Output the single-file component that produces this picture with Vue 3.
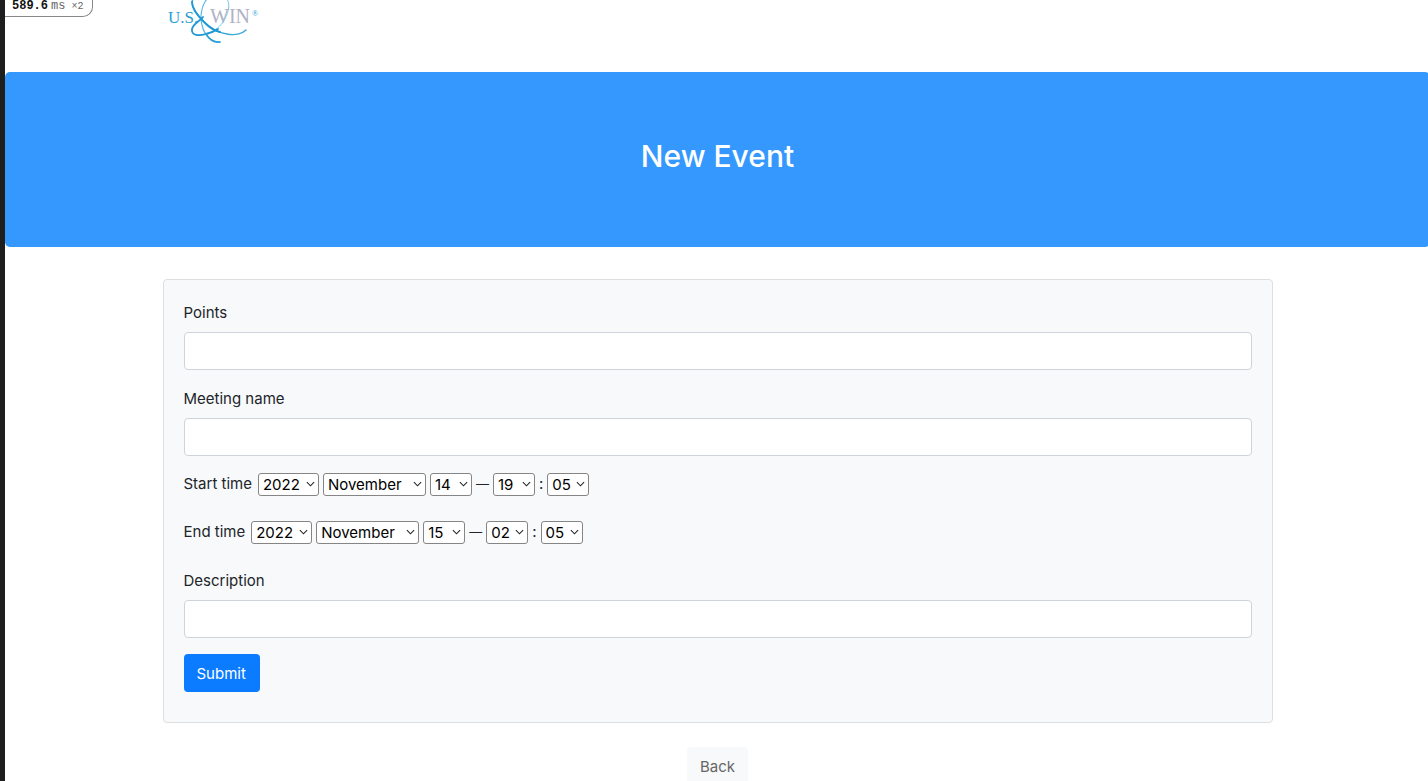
<script setup>
import { reactive } from 'vue'

const months = ['January', 'February', 'March', 'April', 'May', 'June', 'July', 'August', 'September', 'October', 'November', 'December']
const years = ['2017', '2018', '2019', '2020', '2021', '2022', '2023', '2024', '2025', '2026', '2027']
const range = (from, to) => Array.from({ length: to - from + 1 }, (_, i) => String(i + from))
const pad = (list) => list.map((n) => n.padStart(2, '0'))
const days = range(1, 31)
const hours = pad(range(0, 23))
const minutes = pad(range(0, 59))

const form = reactive({ points: '', name: '', description: '' })
const times = reactive([
  { id: 'start', label: 'Start time', year: '2022', month: 'November', day: '14', hour: '19', minute: '05' },
  { id: 'end', label: 'End time', year: '2022', month: 'November', day: '15', hour: '02', minute: '05' },
])
const parts = [
  { key: 'year', options: years, before: '' },
  { key: 'month', options: months, before: '' },
  { key: 'day', options: days, before: '' },
  { key: 'hour', options: hours, before: '—' },
  { key: 'minute', options: minutes, before: ':' },
]
</script>

<template>
  <div class="page">
    <div class="profiler"><b>589.6</b> <span>ms</span> <small>×2</small></div>
    <header class="container header">
      <a href="#" aria-label="U.S. WIN home">
        <svg class="logo" viewBox="0 0 110 50" aria-hidden="true">
          <text x="8" y="23" class="us">U.S.</text>
          <text x="50" y="23" class="win">WIN</text>
          <text x="92" y="16" class="reg">®</text>
          <g fill="none" stroke-linecap="round">
            <path d="M47 -1C41 6 40 17 42 25C44 34 50 42 60 42" stroke="#5bb8e2" stroke-width="1.2" />
            <path d="M67 -1C71 5 68 14 63 22C59 28 53 32 45 34" stroke="#7cc6e8" stroke-width="1" />
            <path d="M33 -1C30 5 34 12 42 20C50 28 58 33 67 34C76 36 83 33 86 30" stroke="#3aa8da" stroke-width="1.4" />
            <path d="M32 2C32 9 38 16 45 23C50 28 55 31 60 32" stroke="#1e98d3" stroke-width="1.8" />
            <path d="M43 17C40 21 33 24 32 29C31 36 39 36 46 34C51 33 55 31 58 29" stroke="#1e98d3" stroke-width="1.8" />
            <path d="M46 34C49 39 53 43 60 42" stroke="#2aa0d8" stroke-width="1.6" />
          </g>
        </svg>
      </a>
    </header>
    <section class="banner"><h1>New Event</h1></section>
    <main class="container">
      <form class="card" @submit.prevent>
        <div class="group">
          <label for="points">Points</label>
          <input id="points" v-model="form.points" type="text">
        </div>
        <div class="group">
          <label for="name">Meeting name</label>
          <input id="name" v-model="form.name" type="text">
        </div>
        <div v-for="time in times" :key="time.id" class="time">
          <label :for="time.id + '-year'">{{ time.label }}</label>
          <template v-for="part in parts" :key="part.key">
            <span v-if="part.before" :class="{ dash: part.before === '—' }">{{ part.before }}</span>
            <span class="picker" :class="part.key">
              <select :id="time.id + '-' + part.key" v-model="time[part.key]" :aria-label="time.label + ' ' + part.key">
                <option v-for="option in part.options" :key="option">{{ option }}</option>
              </select>
              <svg viewBox="0 0 10 6" aria-hidden="true"><path d="M1 1L5 5L9 1" /></svg>
            </span>
          </template>
        </div>
        <div class="group">
          <label for="description">Description</label>
          <input id="description" v-model="form.description" type="text">
        </div>
        <button class="button primary" type="submit">Submit</button>
      </form>
      <div class="footer"><a class="button light" href="#">Back</a></div>
    </main>
  </div>
</template>

<style>
body {
  margin: 0;
  background: #fff;
  overflow: hidden;
}
</style>

<style scoped>
* {
  box-sizing: border-box;
}
.page {
  position: relative;
  min-height: 100vh;
  margin-right: -2px;
  border-left: 5px solid #1e1e1e;
  color: #212529;
  font: 15px/24px Inter, "Liberation Sans", sans-serif;
}
.profiler {
  position: absolute;
  top: 0;
  left: 0;
  width: 88px;
  height: 17px;
  padding-left: 7px;
  border: solid #888;
  border-width: 0 1px 1px 0;
  border-radius: 0 0 10px 0;
  color: #666;
  font: 12px/13px "Liberation Mono", monospace;
  white-space: nowrap;
  display: flex;
  gap: 3px;
}
.profiler b {
  color: #111;
}
.profiler small {
  margin-left: 3px;
  font-size: 10px;
}
.container {
  max-width: 1110px;
  margin: 0 auto;
}
.header {
  height: 72px;
}
.logo {
  display: block;
  width: 110px;
  height: 50px;
  margin-left: -3px;
}
.logo text {
  font-family: "Liberation Serif", serif;
}
.us {
  fill: #2b9fd5;
  font-size: 17px;
}
.win {
  fill: #b0b2c6;
  font-size: 20px;
}
.reg {
  fill: #2b9fd5;
  font-size: 8px;
}
.banner {
  padding: 65px 32px 63px;
  border-radius: 5px;
  background: #3498ff;
  color: #fff;
  text-align: center;
}
h1 {
  margin: 0 0 8px;
  font-size: 30px;
  font-weight: 500;
  line-height: 39px;
}
.card {
  margin-top: 32px;
  padding: 20px 20px 30px;
  border: 1px solid #dcdee0;
  border-radius: 4px;
  background: #f8f9fb;
}
.group {
  margin-bottom: 16px;
}
.group label {
  display: block;
  margin-bottom: 6px;
  line-height: 26px;
}
.group input {
  display: block;
  width: 100%;
  height: 38px;
  padding: 6px 12px;
  border: 1px solid #ced4da;
  border-radius: 4px;
  background: #fff;
  font: inherit;
}
.time {
  display: flex;
  align-items: center;
  gap: 4px;
  height: 24px;
  margin-bottom: 24px;
  line-height: 26px;
}
.time label {
  margin-right: 2px;
}
.dash {
  font-size: 13px;
}
.picker {
  position: relative;
  display: flex;
}
.picker select {
  appearance: none;
  width: 100%;
  height: 23px;
  padding: 0 4px;
  border: 1px solid #858585;
  border-radius: 3px;
  background: #fff;
  color: #000;
  font: inherit;
  line-height: 21px;
}
.picker svg {
  position: absolute;
  top: 8px;
  right: 4px;
  width: 9px;
  height: 6px;
  fill: none;
  stroke: #222;
  stroke-width: 1.2;
  pointer-events: none;
}
.year {
  width: 61px;
}
.month {
  width: 103px;
}
.day,
.hour,
.minute {
  width: 42px;
}
.button {
  display: inline-block;
  height: 38px;
  padding: 8px 13px 6px;
  border: 0;
  border-radius: 4px;
  font: inherit;
  text-decoration: none;
  vertical-align: top;
}
.primary {
  padding: 8px 14px 6px 13px;
  background: #0b7bff;
  color: #fff;
}
.light {
  background: #f8f9fa;
  color: #666;
}
.footer {
  margin-top: 24px;
  text-align: center;
}
</style>
